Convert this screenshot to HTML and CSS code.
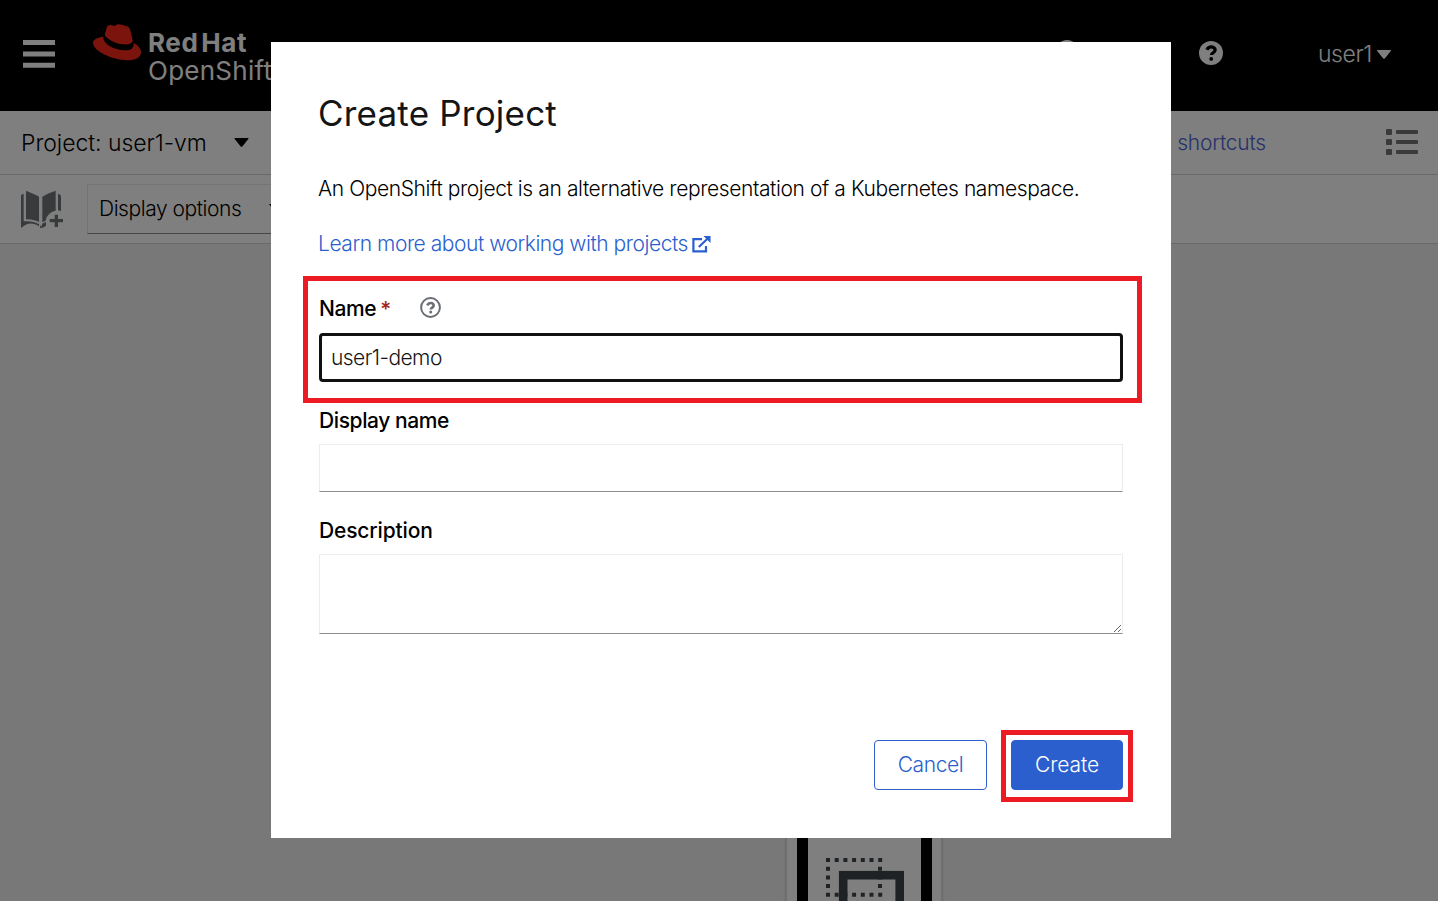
FILE: index.html
```
<!DOCTYPE html>
<html lang="en">
<head>
<meta charset="utf-8">
<title>Create Project</title>
<link rel="stylesheet" href="styles.css">
</head>
<body>
<div class="app">
  <header class="masthead">
    <svg class="menu-icon" width="32" height="28" viewBox="0 0 32 28"><path d="M0 0h32v5H0zM0 11.4h32v5H0zM0 22.8h32v5H0z"/></svg>
    <div class="brand">
      <svg class="hat" width="48" height="37" viewBox="0 0 144 111">
        <path d="M35 33L41 11C44 3 48 1 56 4L66 6C72-1 78 0 86 2C91 2 94 4 97 6C107 7 111 13 112 19L119 48C122 58 105 63 89 61C67 59 41 45 35 33Z"/>
        <path d="M31 38C28 60 67 79 98 79C113 79 123 74 122 56C139 66 145 77 144 87C141 107 115 112 88 107C48 102 8 82 1 62C-3 47 10 41 31 38Z"/>
      </svg>
      <div class="brand-text"><span class="brand-bold">Red Hat</span><span class="brand-light">OpenShift</span></div>
    </div>
    <div class="masthead-tools">
      <svg class="plus-icon" width="24" height="24" viewBox="0 0 24 24"><path fill-rule="evenodd" d="M12 0a12 12 0 100 24 12 12 0 000-24zM10 5h4v5h5v4h-5v5h-4v-5H5v-4h5z"/></svg>
      <svg class="help-icon" width="24" height="24" viewBox="0 0 24 24"><circle cx="12" cy="12" r="12"/><path class="help-mark" d="M7.8 8.7C8.8 6.8 10.2 5.8 12.2 5.8c2.3 0 4 1.3 4 3.2 0 2.7-3.8 2.7-3.8 5.1"/><circle class="help-dot" cx="12.2" cy="17.9" r="1.9"/></svg>
      <div class="user"><span class="user-name">user1</span><svg width="14" height="9" viewBox="0 0 14 9"><path d="M.5 0h13c.6 0 .6.6.3 1L8 8.2c-.7.8-1.3.8-2 0L.2 1C-.1.6 0 0 .5 0z"/></svg></div>
    </div>
  </header>
  <div class="project-bar">
    <span class="project-name">Project: user1-vm</span>
    <svg class="project-caret" width="15" height="9" viewBox="0 0 14 9"><path d="M.5 0h13c.6 0 .6.6.3 1L8 8.2c-.7.8-1.3.8-2 0L.2 1C-.1.6 0 0 .5 0z"/></svg>
    <a class="shortcuts">View shortcuts</a>
    <svg class="list-icon" width="32" height="26" viewBox="0 0 32 26"><rect width="6" height="6" rx="1"/><rect y="10" width="6" height="6" rx="1"/><rect y="20" width="6" height="6" rx="1"/><rect x="10" y="1" width="22" height="4" rx="1"/><rect x="10" y="11" width="22" height="4" rx="1"/><rect x="10" y="21" width="22" height="4" rx="1"/></svg>
  </div>
  <div class="toolbar">
    <svg class="book-icon" width="42" height="39" viewBox="0 0 126 117">
      <path d="M15 2C30 8 42 13 54 20V96C41 90 29 87 15 88ZM64 20C76 12 91 6 104 2V62C88 65 77 76 74 92L64 97Z"/>
      <path d="M8 11V94C26 92 42 96 54 102V109C38 98 22 98 8 108L2 113Q0 114 0 109V17Q0 12 8 11ZM111 11C117 12 120 15 120 20V63L111 61ZM63 101L75 96L75 107L63 115ZM57 107h5v7h-5z"/>
      <path d="M101 74h10v13h15v10h-15v14h-10V97H86V87h15z"/>
    </svg>
    <div class="display-select"><span>Display options</span><svg width="14" height="9" viewBox="0 0 14 9"><path d="M0 0h14L7 9z"/></svg></div>
  </div>
  <main class="canvas">
    <div class="vm-card"><div class="vm-frame">
      <svg width="80" height="76" viewBox="0 0 80 76">
        <path class="dots" d="M0 2H57M0 10.7H4M52 10.7H57M0 19.4H4M52 19.4H57M0 28.1H4M52 28.1H57M0 36.8H57"/>
        <rect class="solid" x="17.2" y="17.2" width="56.5" height="50"/>
      </svg>
    </div></div>
  </main>
</div>

<div class="backdrop">
  <form class="modal">
    <h1 class="title">Create Project</h1>
    <p class="intro">An OpenShift project is an alternative representation of a Kubernetes namespace.</p>
    <p class="learn"><a>Learn more about working with projects</a><svg width="19" height="18" viewBox="0 0 19 18"><path class="ext-box" d="M10 4.2H1.4V16.4H14V11"/><path class="ext-line" d="M6.8 12L16 3.2"/><path class="ext-head" d="M11.5 1h7v7z"/></svg></p>
    <div class="label-row"><label class="label name-label" for="name">Name</label><span class="required">*</span>
      <svg class="hint" width="21" height="21" viewBox="0 0 21 21"><circle cx="10.5" cy="10.5" r="9.4"/><path class="hint-mark" d="M7.2 8.3C8 6.8 9 6 10.6 6c1.8 0 3.1 1 3.1 2.5 0 2.1-2.9 2.1-2.9 4"/><circle class="hint-dot" cx="10.7" cy="15" r="1.5"/></svg>
    </div>
    <input class="input focused" id="name" type="text" value="user1-demo">
    <label class="label display-label" for="display">Display name</label>
    <input class="input" id="display" type="text">
    <label class="label description-label" for="description">Description</label>
    <textarea class="input area" id="description"></textarea>
    <div class="actions"><button class="button cancel" type="button">Cancel</button><button class="button create" type="button">Create</button></div>
    <div class="callout callout-name"></div>
    <div class="callout callout-create"></div>
  </form>
</div>
</body>
</html>
```
FILE: styles.css
```
* { box-sizing: border-box; }
html, body { height: 100%; margin: 0; overflow: hidden; }
body { font-family: Inter, "Open Sans", sans-serif; font-weight: 300; font-size: 21px; color: #000; }
svg { flex: none; display: block; }

.app { height: 100%; display: flex; flex-direction: column; background: #f0f0f0; white-space: nowrap; }
.masthead { height: 111px; flex: none; background: #000; color: #fff; fill: #fff; display: flex; padding-left: 23px; }
.menu-icon { margin-top: 40px; }
.brand { display: flex; margin: 24px 0 0 38px; }
.hat { fill: #f4281b; }
.brand-text { display: flex; flex-direction: column; margin: 5px 0 0 7px; font-size: 26px; line-height: 27.5px; }
.brand-bold { font-size: 26px; font-weight: 700; letter-spacing: 0.6px; word-spacing: -4px; }
.brand-light { font-weight: 400; letter-spacing: 0.25px; }
.masthead-tools { margin-left: auto; padding-right: 47px; display: flex; align-items: flex-start; }
.plus-icon { margin: 40px 120px 0 0; }
.help-icon { margin: 41px 95px 0 0; }
.help-mark { fill: none; stroke: #000; stroke-width: 3.2; }
.help-dot { fill: #000; }
.user { display: flex; align-items: center; margin-top: 39px; height: 30px; gap: 5px; }
.user-name { font-size: 23px; letter-spacing: -0.4px; }

.project-bar { height: 64px; flex: none; background: #fff; border-bottom: 1px solid #d2d2d2; display: flex; align-items: center; padding: 0 20px 0 21px; }
.project-name { font-size: 23px; letter-spacing: -0.05px; }
.project-caret { margin-left: 27px; }
.shortcuts { margin-left: auto; color: #4c63d4; letter-spacing: -0.2px; }
.list-icon { fill: #707478; margin: -2px 0 0 120px; }
.toolbar { height: 69px; flex: none; background: #fff; border-bottom: 1px solid #d2d2d2; display: flex; align-items: center; padding-left: 21px; gap: 24px; }
.book-icon { fill: #707478; }
.display-select { width: 220px; height: 50px; border: 1px solid #e8e8e8; border-bottom-color: #8a8d90; display: flex; align-items: center; gap: 28px; padding: 0 0 1px 11px; letter-spacing: -0.45px; }
.canvas { flex: 1; display: flex; justify-content: center; padding-left: 290px; overflow: hidden; }
.vm-card { width: 156px; height: 700px; margin-top: 500px; background: #fff; border: 1px solid #ddd; box-shadow: 0 1px 3px rgba(3,3,3,.2); padding: 0 9px 0 10px; }
.vm-frame { height: 300px; border: 11px solid #000; padding: 102px 0 0 18px; }
.dots { fill: none; stroke: #40464b; stroke-width: 4; stroke-dasharray: 4 4.7; }
.solid { fill: none; stroke: #3c444a; stroke-width: 8.6; }

.backdrop { position: absolute; inset: 0; background: rgba(0,0,0,.5); display: flex; justify-content: center; align-items: flex-start; padding: 42px 0 0 4px; }
.modal { position: relative; width: 900px; height: 796px; background: #fff; padding: 46px 48px; display: flex; flex-direction: column; }
.title { margin: 0 0 0 -1px; font-size: 35px; font-weight: 400; line-height: 50px; letter-spacing: 0.2px; color: #151515; }
.intro { margin: 35px 0 0 -1px; line-height: 32px; letter-spacing: -0.4px; white-space: nowrap; }
.learn { margin: 23px 0 0 -1px; line-height: 32px; height: 32px; display: flex; align-items: center; gap: 4px; color: #2b5fce; letter-spacing: -0.46px; }
.ext-box, .ext-line { fill: none; stroke: #2b5fce; stroke-width: 2.2; }
.ext-head { fill: #2b5fce; }
.label-row { margin-top: 33px; height: 32px; display: flex; align-items: center; }
.label { line-height: 32px; font-weight: 500; }
.name-label { letter-spacing: -0.4px; }
.required { color: #a32119; font-weight: 500; margin-left: 4px; }
.hint { fill: none; stroke: #6a6e73; stroke-width: 2; margin: -3px 0 0 29px; }
.hint-mark { stroke-width: 2.6; }
.hint-dot { fill: #6a6e73; stroke: none; }
.input { width: 804px; height: 48px; flex: none; margin: 8px 0 0; border: 1px solid #ececec; border-bottom-color: #8a8d90; padding: 0 12px; font: 300 21px Inter, sans-serif; letter-spacing: -0.55px; color: #151515; background: #fff; outline: 0; }
.focused { height: 49px; margin-top: 8px; border: 3px solid #111; border-radius: 4px; padding: 0 9px; }
.display-label { margin-top: 23px; letter-spacing: -0.4px; }
.display-label + .input { margin-top: 7px; }
.description-label { margin-top: 23px; letter-spacing: -0.15px; }
.area { height: 80px; margin-top: 7px; resize: vertical; }
.actions { margin-top: 106px; display: flex; justify-content: flex-end; gap: 24px; }
.button { height: 50px; width: 113px; padding: 0 0 2px; border-radius: 4px; font: 300 21px Inter, sans-serif; border: 1px solid #2b5fce; background: #fff; color: #2b5fce; letter-spacing: -0.4px; }
.create { width: 112px; background: #2b5fce; color: #fff; letter-spacing: -0.1px; }
.callout { position: absolute; border: 5px solid #ed1c24; pointer-events: none; }
.callout-name { left: 32px; top: 234px; width: 839px; height: 127px; }
.callout-create { left: 730px; top: 688px; width: 132px; height: 72px; }
```
